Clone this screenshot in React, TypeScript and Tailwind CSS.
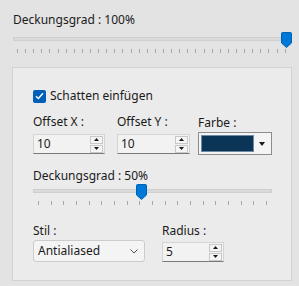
import React from 'react'

type SliderProps = {
  ticks: number
  value: number
  tickInset: number
}

function Thumb() {
  return (
    <svg width="11" height="16" viewBox="0 0 11 16">
      <path d="M0.5 1.5 Q0.5 0.5 1.5 0.5 H9.5 Q10.5 0.5 10.5 1.5 V11 L5.5 15.5 L0.5 11 Z" fill="#0078d7" stroke="#0063b1" strokeWidth="1" />
    </svg>
  )
}

function Slider(props: SliderProps) {
  return (
    <div className="relative h-[22px]">
      <div className="absolute left-0 right-0 top-[5px] h-[4px] border border-[#cfcfcf] bg-[#dadada]" />
      <div
        className="absolute top-0"
        style={{ left: `calc(${props.tickInset}px + (100% - ${props.tickInset * 2}px) * ${props.value} - 5.5px)` }}
      >
        <Thumb />
      </div>
      <div className="absolute top-[17px] flex justify-between" style={{ left: props.tickInset, right: props.tickInset }}>
        {Array.from({ length: props.ticks }).map((_, i) => (
          <div key={i} className="h-[4px] w-px bg-[#a8a8a8]" />
        ))}
      </div>
    </div>
  )
}

function SpinButtons() {
  return (
    <div className="flex flex-col gap-px">
      <div className="flex h-[8px] w-[13px] items-center justify-center border border-[#c8c8c8] bg-[#f5f5f5]">
        <svg width="5" height="3" viewBox="0 0 5 3"><path d="M2.5 0 L5 3 H0 Z" fill="#1a1a1a" /></svg>
      </div>
      <div className="flex h-[8px] w-[13px] items-center justify-center border border-[#c8c8c8] bg-[#f5f5f5]">
        <svg width="5" height="3" viewBox="0 0 5 3"><path d="M0 0 H5 L2.5 3 Z" fill="#1a1a1a" /></svg>
      </div>
    </div>
  )
}

function SpinInput({ value, width }: { value: string; width: string }) {
  return (
    <div className={`flex h-[20px] items-center justify-between border border-[#d4d4d4] border-b-[#7a7a7a] bg-[#f2f2f2] pl-[3px] pr-[1px] ${width}`}>
      <span>{value}</span>
      <SpinButtons />
    </div>
  )
}

export default function App() {
  return (
    <div
      className="h-[286px] w-[299px] overflow-hidden bg-[#e3e3e3] text-[12px] leading-[16px] text-[#1a1a1a]"
      style={{ fontFamily: '"Noto Sans", "Open Sans", sans-serif' }}
    >
      <div className="pl-[13px] pr-[9px] pt-[12px]">
        <div>Deckungsgrad : 100%</div>
        <div className="mt-[4px]">
          <Slider ticks={34} value={1} tickInset={4} />
        </div>
      </div>

      <div className="ml-[12px] mr-[7px] mt-[13px] h-[214px] border border-[#d2d2d2] bg-[#ebebeb] pl-[20px] pt-[20px]">
        <label className="flex items-center gap-[4px]">
          <span className="flex h-[13px] w-[13px] items-center justify-center rounded-[2px] bg-[#005fb8]">
            <svg width="9" height="8" viewBox="0 0 9 8">
              <path d="M1 4.2 L3.4 6.5 L8 1.3" fill="none" stroke="#fff" strokeWidth="1.4" />
            </svg>
          </span>
          <span>Schatten einfügen</span>
        </label>

        <div className="mt-[10px] flex items-end gap-[12px]">
          <div className="flex flex-col gap-[4px] pb-[1px]">
            <span>Offset X :</span>
            <SpinInput value="10" width="w-[72px]" />
          </div>
          <div className="flex flex-col gap-[4px] pb-[1px]">
            <span>Offset Y :</span>
            <SpinInput value="10" width="w-[73px]" />
          </div>
          <div className="ml-[-4px] flex flex-col gap-[1px]">
            <span>Farbe :</span>
            <div className="flex h-[23px] w-[74px] border border-[#8c8c8c] bg-[#f4f4f4] p-[2px]">
              <div className="flex-1 border border-[#6f8aa0] bg-[#0b3557]" />
              <div className="flex w-[15px] items-center justify-center">
                <svg width="6" height="4" viewBox="0 0 6 4"><path d="M0 0 H6 L3 4 Z" fill="#1a1a1a" /></svg>
              </div>
            </div>
          </div>
        </div>

        <div className="mt-[13px] w-[239px]">
          <div>Deckungsgrad : 50%</div>
          <div>
            <Slider ticks={19} value={0.45} tickInset={5} />
          </div>
        </div>

        <div className="mt-[17px] flex items-start gap-[17px]">
          <div className="flex flex-col gap-[1px]">
            <span>Stil :</span>
            <div className="flex h-[22px] w-[112px] items-center justify-between rounded-[3px] border border-[#cccccc] bg-[#f4f4f4] pl-[4px] pr-[6px]">
              <span>Antialiased</span>
              <svg width="8" height="5" viewBox="0 0 8 5"><path d="M0.5 0.5 L4 4 L7.5 0.5" fill="none" stroke="#555" strokeWidth="1" /></svg>
            </div>
          </div>
          <div className="flex flex-col gap-[3px]">
            <span>Radius :</span>
            <SpinInput value="5" width="w-[62px]" />
          </div>
        </div>
      </div>
    </div>
  )
}
